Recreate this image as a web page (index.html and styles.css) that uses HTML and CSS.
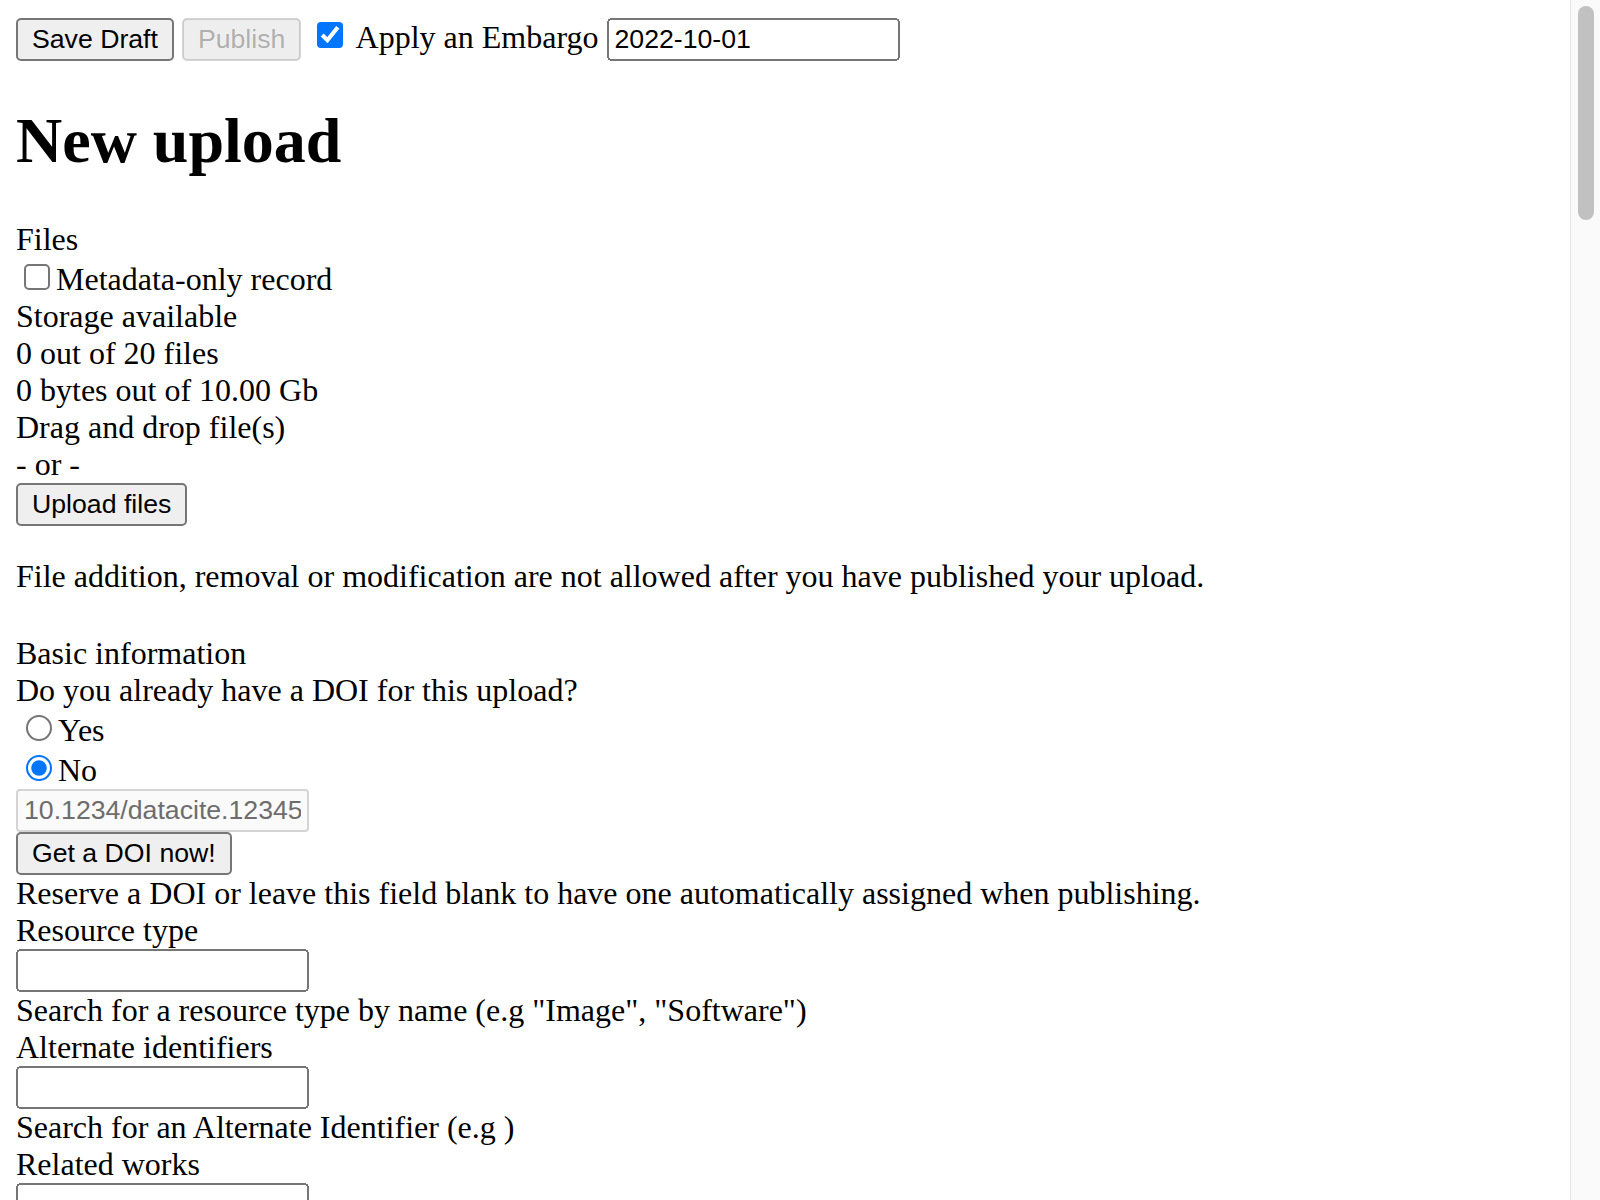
FILE: index.html
```html
<!DOCTYPE html>
<html lang="en">
<head>
<meta charset="utf-8">
<title>New upload</title>
<link rel="stylesheet" href="styles.css">
</head>
<body class="body">
<div class="page">
<div class="actions">
  <button class="btn" type="button">Save Draft</button>
  <button class="btn" type="button" disabled>Publish</button>
  <input class="check" type="checkbox" checked> Apply an Embargo <input class="field" type="text" value="2022-10-01">
</div>
<h1 class="title">New upload</h1>
<div class="row">Files</div>
<div class="row"><input class="check" type="checkbox">Metadata-only record</div>
<div class="row">Storage available</div>
<div class="row">0 out of 20 files</div>
<div class="row">0 bytes out of 10.00 Gb</div>
<div class="row">Drag and drop file(s)</div>
<div class="row">- or -</div>
<div class="row"><button class="btn" type="button">Upload files</button></div>
<p class="note">File addition, removal or modification are not allowed after you have published your upload.</p>
<div class="row section">Basic information</div>
<div class="row">Do you already have a DOI for this upload?</div>
<div class="row"><input class="radio" type="radio" name="doi">Yes</div>
<div class="row"><input class="radio" type="radio" name="doi" checked>No</div>
<div class="row"><input class="field field-disabled" type="text" value="10.1234/datacite.12345" disabled></div>
<div class="row"><button class="btn" type="button">Get a DOI now!</button></div>
<div class="row">Reserve a DOI or leave this field blank to have one automatically assigned when publishing.</div>
<div class="row">Resource type</div>
<div class="row"><input class="field" type="text"></div>
<div class="row">Search for a resource type by name (e.g "Image", "Software")</div>
<div class="row">Alternate identifiers</div>
<div class="row"><input class="field" type="text"></div>
<div class="row">Search for an Alternate Identifier (e.g )</div>
<div class="row">Related works</div>
<div class="row"><input class="field" type="text"></div>
</div>
<div class="scrollbar"><div class="scrollbar-thumb"></div></div>
</body>
</html>
```
FILE: styles.css
```css
html {
  background: #ffffff;
}
.body {
  margin: 0;
}
.page {
  zoom: 2;
  margin: 8px;
  margin-right: 23px;
  font-family: "Liberation Serif", "Times New Roman", serif;
  font-size: 16px;
  color: #000000;
}
.btn,
.field {
  font-family: "Liberation Sans", Arial, sans-serif;
  font-size: 13.333px;
}
.field {
  box-sizing: border-box;
  width: 146.5px;
}
.field-disabled {
  color: #6d6d6d;
  background-color: #fafafa;
  border: 1px solid #d4d4d4;
  border-radius: 2px;
  padding: 2px 3px;
}
.title {
  font-size: 32px;
  font-weight: bold;
  margin: 21.44px 0;
}
.note {
  margin: 16px 0;
}
.section {
  margin-top: 20px;
}
.scrollbar {
  position: fixed;
  top: 0;
  right: 0;
  bottom: 0;
  width: 29px;
  background: #fafafa;
  border-left: 1px solid #e8e8e8;
  box-sizing: content-box;
}
.scrollbar-thumb {
  margin: 6px 6px 0 7px;
  height: 214px;
  border-radius: 8px;
  background: #c1c1c1;
}
```
